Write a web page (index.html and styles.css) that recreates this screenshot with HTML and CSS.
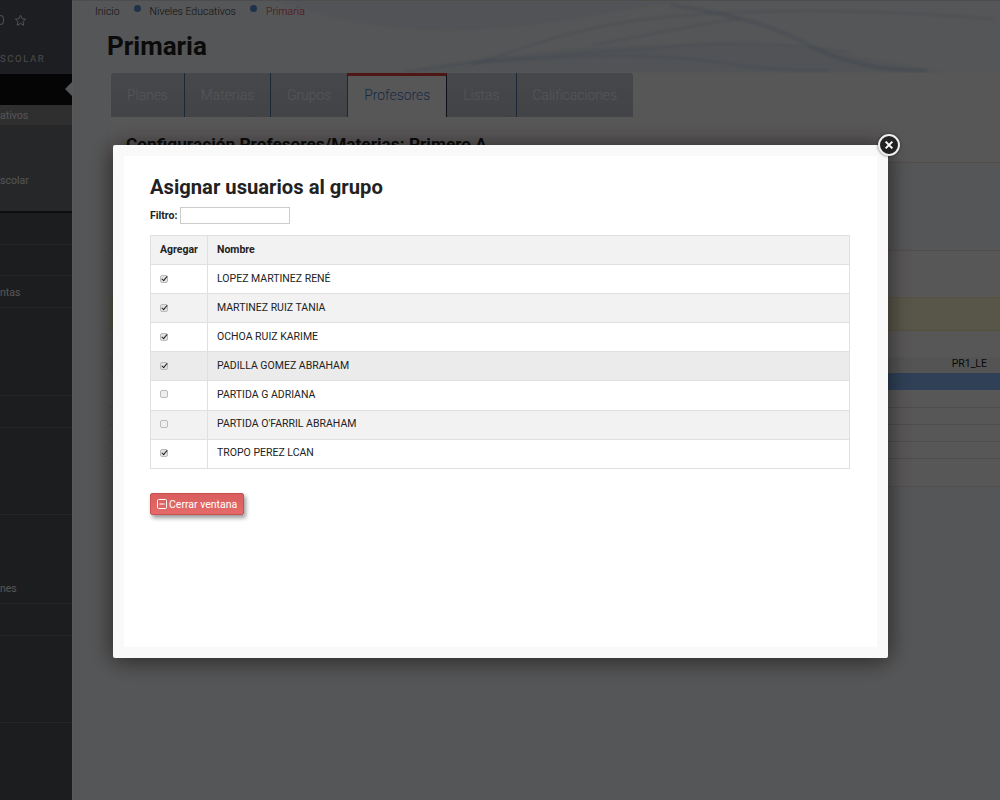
FILE: index.html
```html
<!DOCTYPE html>
<html lang="es">
<head>
  <meta charset="UTF-8" />
  <meta name="viewport" content="width=device-width, initial-scale=1.0" />
  <title>Primaria</title>
  <link rel="stylesheet" href="styles.css">
</head>
<body>

  <div class="layout">
    <!-- Menu lateral -->
    <aside class="sidebar">
      <div class="side-top">
        <span class="side-dot"></span>
        <svg class="side-star" viewBox="0 0 24 24" width="13" height="13"><path d="M12 2.5l2.9 6.2 6.6.8-4.9 4.6 1.3 6.6-5.9-3.3-5.9 3.3 1.3-6.6-4.9-4.6 6.6-.8z"/></svg>
      </div>
      <div class="side-title">SCOLAR</div>
      <div class="side-active"></div>
      <div class="side-sub">ativos</div>
      <div class="side-group">scolar</div>
      <div class="side-item h32"></div>
      <div class="side-item h31"></div>
      <div class="side-item h32">ntas</div>
      <div class="side-item h88"></div>
      <div class="side-item h32"></div>
      <div class="side-item h87"></div>
      <div class="side-item h89 bottom-text">nes</div>
      <div class="side-item h32"></div>
      <div class="side-item h87"></div>
    </aside>

    <main class="main">
      <header class="banner">
        <svg class="waves" viewBox="0 0 927 73">
          <path class="wave-fill" d="M200 0C260 20 330 35 420 28C500 22 560 5 620 0Z"/>
          <path class="wave-fill" d="M330 72C430 50 560 40 700 45C780 50 830 66 880 72Z"/>
          <path class="wave-line" d="M398 65C470 40 520 22 608 15C700 8 800 8 927 18"/>
          <path class="wave-line wave-thick" d="M600 4C650 12 700 22 740 45C770 60 810 72 860 70"/>
          <path class="wave-line" d="M330 72C430 55 520 55 610 45C680 40 720 44 780 52"/>
          <path class="wave-line" d="M520 45C560 38 620 24 670 18"/>
          <path class="wave-line" d="M400 62C480 58 560 50 650 62C690 68 720 72 760 70"/>
        </svg>
        <div class="breadcrumb">
          <span>Inicio</span>
          <i class="crumb-dot"></i>
          <span>Niveles Educativos</span>
          <i class="crumb-dot"></i>
          <span class="crumb-current">Primaria</span>
        </div>
        <h1>Primaria</h1>
      </header>

      <section class="content">
        <div class="tabs">
          <a class="tab">Planes</a>
          <a class="tab">Materias</a>
          <a class="tab">Grupos</a>
          <a class="tab tab-active">Profesores</a>
          <a class="tab">Listas</a>
          <a class="tab">Calificaciones</a>
        </div>
        <div class="panel">
          <h2>Configuración Profesores/Materias: Primero A</h2>
          <div class="band band-a"></div>
          <div class="band band-b"></div>
          <div class="band band-c"></div>
          <div class="band-d"></div>
          <div class="grid-head">PR1_LE</div>
          <div class="grid-blue"></div>
          <div class="grid-row first"></div>
          <div class="grid-row"></div>
          <div class="grid-row"></div>
          <div class="grid-row"></div>
          <div class="grid-last"></div>
        </div>
      </section>
    </main>
  </div>

  <div class="overlay"></div>

  <!-- Ventana modal -->
  <div class="modal">
    <button class="modal-close" aria-label="Cerrar">
      <svg viewBox="0 0 12 12" width="10" height="10"><path d="M2 2l8 8M10 2l-8 8"/></svg>
    </button>
    <div class="modal-body">
      <h3>Asignar usuarios al grupo</h3>
      <div class="filter">
        <label for="filtro">Filtro:</label>
        <input type="text" id="filtro" />
      </div>

      <table class="users">
        <thead>
          <tr><th class="col-add">Agregar</th><th>Nombre</th></tr>
        </thead>
        <tbody>
          <tr><td><input type="checkbox" checked /></td><td>LOPEZ MARTINEZ RENÉ</td></tr>
          <tr><td><input type="checkbox" checked /></td><td>MARTINEZ RUIZ TANIA</td></tr>
          <tr><td><input type="checkbox" checked /></td><td>OCHOA RUIZ KARIME</td></tr>
          <tr class="row-hover"><td><input type="checkbox" checked /></td><td>PADILLA GOMEZ ABRAHAM</td></tr>
          <tr class="row-tall"><td><input type="checkbox" /></td><td>PARTIDA G ADRIANA</td></tr>
          <tr><td><input type="checkbox" /></td><td>PARTIDA O'FARRIL ABRAHAM</td></tr>
          <tr><td><input type="checkbox" checked /></td><td>TROPO PEREZ LCAN</td></tr>
        </tbody>
      </table>

      <button class="close-button">
        <svg viewBox="0 0 10 10" width="10" height="10"><rect x="0.5" y="0.5" width="9" height="9" rx="1"/><path d="M2.5 5h5"/></svg>
        Cerrar ventana
      </button>
    </div>
  </div>

</body>
</html>
```

FILE: styles.css
```css
* {
  box-sizing: border-box;
}

html, body {
  height: 100%;
}

body {
  margin: 0;
  overflow: hidden;
  font-family: Roboto, "Liberation Sans", sans-serif;
  background-color: #f4f5f8;
  color: #333;
}

.layout {
  display: flex;
  height: 800px;
}

/* Menu lateral */
.sidebar {
  width: 72px;
  flex-shrink: 0;
  overflow: hidden;
  background-color: #50535a;
  color: #f0f0f0;
  font-size: 10.5px;
}

.side-top {
  height: 40px;
  display: flex;
  align-items: center;
  gap: 10px;
  background-color: #555860;
}

.side-dot {
  width: 4px;
  height: 10px;
  border: 1px solid #e0e0e4;
  border-left: none;
  border-radius: 0 5px 5px 0;
}

.side-star {
  fill: none;
  stroke: #fff;
  stroke-width: 1.6;
}

.side-title {
  height: 34px;
  padding-top: 13px;
  letter-spacing: 1.6px;
  font-size: 9.5px;
  color: #d5d5d9;
  background-color: #555860;
}

.side-active {
  height: 31px;
  position: relative;
  background-color: #121012;
}

.side-active::after {
  content: "";
  position: absolute;
  right: 0;
  top: 8px;
  border-style: solid;
  border-width: 7px 7px 7px 0;
  border-color: transparent #f4f5f8 transparent transparent;
}

.side-sub {
  height: 20px;
  padding-top: 4px;
  background-color: #868688;
}

.side-group {
  height: 88px;
  padding-top: 49px;
  background-color: #6d6f74;
  border-bottom: 2px solid #25262a;
}

.side-item {
  border-bottom: 1px solid #6a6c72;
}

.h31 { height: 31px; }
.h32 { height: 32px; padding-top: 10px; }
.h87 { height: 87px; }
.h88 { height: 88px; }
.h89 { height: 89px; }

.bottom-text {
  padding-top: 67px;
}

/* Contenido */
.main {
  flex: 1;
  min-width: 0;
  border-left: 1px solid #fff;
}

.banner {
  height: 73px;
  position: relative;
  padding: 3px 0 0 22px;
  overflow: hidden;
  border-top: 1px solid #ddd;
}

.waves {
  position: absolute;
  left: 0;
  top: 0;
  width: 100%;
  height: 100%;
  filter: blur(1px);
}

.wave-fill {
  fill: #c9d9ee;
  opacity: 0.3;
}

.wave-line {
  fill: none;
  stroke: #b5cbe8;
  stroke-width: 2;
  opacity: 0.4;
}

.wave-thick {
  stroke-width: 4;
}

.breadcrumb {
  position: relative;
  display: flex;
  align-items: center;
  font-size: 10.5px;
  font-weight: 300;
  color: #333;
  height: 14px;
}

.crumb-dot {
  width: 7px;
  height: 7px;
  border-radius: 50%;
  margin: -5px 9px 0 14px;
  background-color: #5a8fd4;
}

.crumb-current {
  color: #e03c3c;
}

h1 {
  position: relative;
  margin: 13px 0 0 12px;
  font-size: 26px;
  line-height: 30px;
  font-weight: 700;
  color: #222;
}

.content {
  margin-left: 37px;
  background-color: #fdf9f8;
}

.tabs {
  display: flex;
  height: 44px;
  margin-left: 1px;
  background-color: #fdf9f8;
}

.tab {
  display: flex;
  align-items: center;
  padding: 0 16px;
  font-size: 13.85px;
  font-weight: 300;
  color: #f2f3f6;
  background: linear-gradient(#c8cdd8, #bcc1cb);
  border-right: 1px solid #4a6f9e;
}

.tab:first-child {
  border-top-left-radius: 3px;
}

.tab:last-child {
  border-right: none;
  border-top-right-radius: 3px;
}

.tab-active {
  color: #3f79c4;
  background: #fdf9f8;
  border-top: 3px solid #e2413f;
  padding-bottom: 3px;
  border-right-color: #24303f;
}

.panel {
  padding-top: 17px;
}

h2 {
  margin: 0 0 0 16px;
  height: 28px;
  font-size: 17.3px;
  line-height: 20px;
  font-weight: 700;
  color: #222;
}

.band {
  border-bottom: 1px solid #f4d9d5;
}

.band-a {
  height: 89px;
  border-top: 1px solid #f4d9d5;
  background-color: #f4f5f8;
}

.band-b {
  height: 47px;
  border-bottom-color: #f4efc0;
}

.band-c {
  height: 33px;
  background-color: #fcf6d1;
  border-bottom-color: #f0e8a8;
}

.band-d {
  height: 26px;
}

.grid-head {
  height: 16px;
  padding-right: 13px;
  text-align: right;
  font-size: 10.5px;
  line-height: 14px;
  color: #222;
  background-color: #f0efef;
}

.grid-blue {
  height: 17px;
  margin-left: 10px;
  background-color: #86b7f8;
}

.grid-row {
  height: 17px;
  border-bottom: 1px solid #ddd;
}

.grid-row.first {
  height: 18px;
}

.grid-last {
  height: 28px;
  border-bottom: 1px solid #eee8e4;
}

/* Ventana modal */
.overlay {
  position: fixed;
  left: 0;
  top: 0;
  right: 0;
  bottom: 0;
  background-color: rgba(0, 0, 0, 0.65);
}

.modal {
  position: fixed;
  left: 113px;
  top: 145px;
  width: 775px;
  height: 513px;
  padding: 11px;
  background-color: #f9f9f9;
  border-radius: 2px;
  box-shadow: 0 2px 24px rgba(0, 0, 0, 0.6);
}

.modal-close {
  position: absolute;
  right: -12px;
  top: -11px;
  width: 22px;
  height: 22px;
  padding: 0;
  display: flex;
  align-items: center;
  justify-content: center;
  background-color: #222;
  border: 2px solid #eee;
  border-radius: 50%;
  box-shadow: 0 0 3px rgba(0, 0, 0, 0.6);
}

.modal-close path {
  stroke: #fff;
  stroke-width: 2.4;
  fill: none;
}

.modal-body {
  height: 100%;
  padding: 19px 27px 20px 26px;
  background-color: #fff;
}

h3 {
  margin: 0;
  font-size: 20.2px;
  line-height: 24px;
  font-weight: 700;
  color: #222;
}

.filter {
  display: flex;
  align-items: center;
  gap: 3px;
  margin-top: 8px;
  font-size: 10.5px;
  font-weight: 700;
  color: #222;
}

.filter input {
  width: 110px;
  height: 17px;
  padding: 0 3px;
  border: 1px solid #ccc;
}

.users {
  width: 100%;
  margin-top: 11px;
  border-collapse: collapse;
  font-size: 10.5px;
  color: #222;
}

.users th,
.users td {
  height: 29px;
  padding: 0 9px 1px;
  text-align: left;
  border: 1px solid #e0e0e0;
}

.users th {
  font-weight: 700;
  background-color: #f2f2f2;
}

.col-add {
  width: 57px;
}

.users tbody tr:nth-child(even) td {
  background-color: #f2f2f2;
}

.users tbody tr.row-hover td {
  background-color: #ebebeb;
}

.users tbody tr.row-tall td {
  height: 30px;
}

.users tbody tr.row-tall td,
.users tbody tr.row-tall ~ tr td {
  padding-bottom: 3px;
}

.users input {
  appearance: none;
  display: block;
  position: relative;
  width: 8px;
  height: 8px;
  margin: 0;
  background-color: #eee;
  border: 1px solid #bbb;
  border-radius: 2px;
}

.users input:checked {
  background-color: #e2e2e2;
}

.users input:checked::after {
  content: "";
  position: absolute;
  left: 1.5px;
  top: -0.5px;
  width: 2px;
  height: 5px;
  border: solid #222;
  border-width: 0 1.2px 1.2px 0;
  transform: rotate(40deg);
}

.close-button {
  display: flex;
  align-items: center;
  gap: 2px;
  margin-top: 24px;
  height: 22px;
  padding: 0 6px;
  font-family: inherit;
  font-size: 10.5px;
  font-weight: 400;
  color: #fff;
  background: linear-gradient(#d95f5e, #e46b69);
  border: 1px solid #c9504f;
  border-radius: 2px;
  box-shadow: 2px 3px 4px rgba(0, 0, 0, 0.4);
}

.close-button rect,
.close-button path {
  fill: none;
  stroke: #fff;
  stroke-width: 1;
}
```
